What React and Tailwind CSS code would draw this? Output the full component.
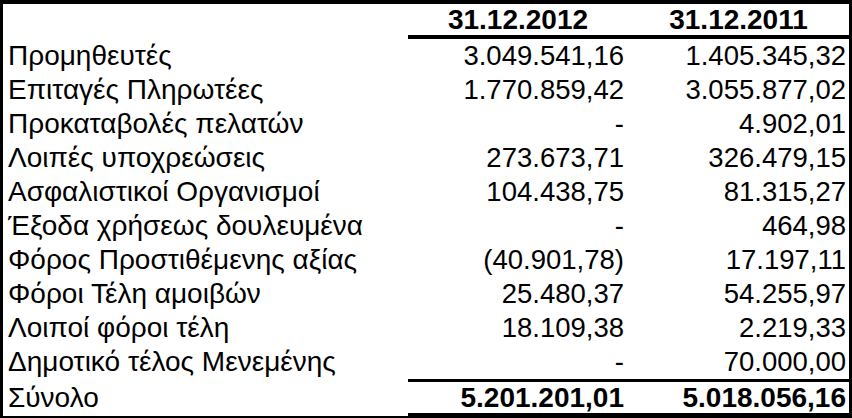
import React from "react";

const rows = [
  ["Προμηθευτές", "3.049.541,16", "1.405.345,32"],
  ["Επιταγές Πληρωτέες", "1.770.859,42", "3.055.877,02"],
  ["Προκαταβολές πελατών", "-", "4.902,01"],
  ["Λοιπές υποχρεώσεις", "273.673,71", "326.479,15"],
  ["Ασφαλιστικοί Οργανισμοί", "104.438,75", "81.315,27"],
  ["Έξοδα χρήσεως δουλευμένα", "-", "464,98"],
  ["Φόρος Προστιθέμενης αξίας", "(40.901,78)", "17.197,11"],
  ["Φόροι Τέλη αμοιβών", "25.480,37", "54.255,97"],
  ["Λοιποί φόροι τέλη", "18.109,38", "2.219,33"],
  ["Δημοτικό τέλος Μενεμένης", "-", "70.000,00"],
];

const App = () => {
  return (
    <div className="w-[852px] h-[418px] bg-white text-black border-t-4 border-l-[3px] border-r-[3px] border-b-2 border-black overflow-hidden font-['Liberation_Sans',Arial,sans-serif] text-[28px]">
      <div className="grid grid-cols-[405px_220px_221px]">
        {/* header */}
        <div className="h-[35px]"></div>
        <div className="h-[35px] border-b-4 border-black text-center font-bold leading-[31px]">31.12.2012</div>
        <div className="h-[35px] border-b-4 border-black text-center font-bold leading-[31px]">31.12.2011</div>

        {rows.map((r, i) => (
          <React.Fragment key={i}>
            <div className="h-[34px] leading-[34px] pl-[5px] whitespace-nowrap">{r[0]}</div>
            <div className="h-[34px] leading-[34px] pr-[4px] text-right text-[27.5px]">{r[1]}</div>
            <div className="h-[34px] leading-[34px] pr-[3px] text-right text-[27.5px]">{r[2]}</div>
          </React.Fragment>
        ))}

        {/* total */}
        <div className="h-[37px] leading-[31px] pl-[5px] pt-[3px]">Σύνολο</div>
        <div className="h-[37px] leading-[31px] pr-[4px] text-right font-bold border-t-[3px] border-b-[3px] border-black">5.201.201,01</div>
        <div className="h-[37px] leading-[31px] pr-[3px] text-right font-bold border-t-[3px] border-b-[3px] border-black">5.018.056,16</div>
      </div>
    </div>
  );
};

export default App;
